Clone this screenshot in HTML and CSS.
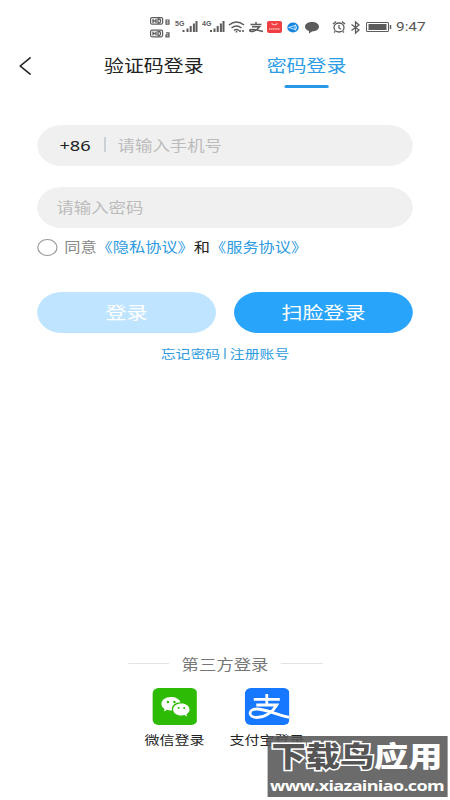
FILE: index.html
```html
<!DOCTYPE html>
<html lang="zh-CN">
<head>
<meta charset="utf-8">
<title>密码登录</title>
<link rel="stylesheet" href="styles.css">
</head>
<body>
<main class="screen">
  <header class="status">
    <svg class="status-icons" viewBox="0 0 396 44" preserveAspectRatio="none" fill="none" stroke="#5c5c5c">
      <g stroke-width="1.2"><rect x="150.6" y="17.6" width="12" height="6.6" rx="1.5"/><rect x="150.6" y="30.2" width="12" height="6.6" rx="1.5"/>
      <path d="M166 24.200v-4.200h3v4.200zM166 22h3M166 32.800h3v2h-3v2h3v-2"/></g>
      <path stroke-width="1.3" d="M153 19v4M156 19v4M153 21h3M158 19v4h1.2q1.4-.3 1.4-2t-1.4-2zM153 31.5v4M156 31.5v4M153 33.5h3M158 31.5v4h1.2q1.4-.3 1.4-2t-1.4-2z"/>
      <path stroke-width="2" d="M183.5 30v2M187.500 28.500v3.500M190.700 26v6M193.900 23.500v8.500M196.500 21v11M211 30v2M214.500 28.500v3.500M217.700 26v6M220.900 23.500v8.500M223.500 21v11"/>
      <path stroke-width="1.5" d="M229 25q7.500-6 15 0M231.500 28q5-4 10 0M234 30.500q2.500-2 5 0"/><path stroke-width="1.6" d="M236.500 31v1.500M240 30v2M243 30v2"/>
      <path stroke-width="1.500" d="M250.500 24.500h11M256 22v3M252 26.700h7.500Q256.500 31 252.500 31.500q-3.500 0-2.500-1.700 3-1.300 13 1.700"/>
      <rect x="267" y="21" width="15" height="12" rx="2" fill="#ef3f43" stroke="none"/><path stroke="#fbb" d="M271.500 23.500q3 2.500 6 0"/><path stroke="#fbb" stroke-dasharray="1.500 .6" stroke-width="1.500" d="M269 29h11"/>
      <ellipse cx="293" cy="27.500" rx="5.700" ry="5" fill="#1685e0" stroke="none"/><path stroke="#b8ddfa" d="M289 27.500l6-2v4zM295 24.500q3 3 0 6"/>
      <path fill="#5c5c5c" stroke="none" d="M312 22c4 0 7 2 7 4.700s-3 4.700-7 4.700l-3 2v-2.300c-2.500-1-4-2.400-4-4.400 0-2.700 3-4.700 7-4.700z"/>
      <ellipse cx="339" cy="27.500" rx="5" ry="4.500" stroke-width="1.300"/><path stroke-width="1.300" d="M333 24l3-2.500M345 24l-3-2.500M339 25v3l2 1.200M335 31.500l-1 1M343 31.500l1 1"/>
      <path stroke-width="1.300" d="M351.500 24.500l7.500 5.500-3.500 3V22l3.500 3-7.500 5.500"/>
      <rect x="366.500" y="22.500" width="22" height="9" rx="1"/><rect x="368.500" y="24" width="18" height="6" fill="#5c5c5c" stroke="none"/><path stroke-width="1.500" d="M390.500 25v4"/>
      <g class="net" fill="#5c5c5c" stroke="none"><text x="175" y="26">5G</text><text x="202" y="26">4G</text></g>
    </svg>
    <time class="clock">9:47</time>
  </header>
  <nav class="tabs">
    <svg class="back" viewBox="0 0 10 18" fill="none" stroke="#222" stroke-width="1.500"><path d="M9.500 .5L.8 9l8.700 8.500"/></svg>
    <span class="tab">验证码登录</span>
    <span class="tab active">密码登录</span>
  </nav>
  <form class="form">
    <div class="field phone"><span class="code">+86</span><i class="bar"></i><span>请输入手机号</span></div>
    <div class="field"><span>请输入密码</span></div>
    <div class="agree"><i class="radio"></i><span class="terms">同意<a>《隐私协议》</a><b>和</b><a>《服务协议》</a></span></div>
    <div class="actions"><span class="btn disabled">登录</span><span class="btn">扫脸登录</span></div>
    <div class="links"><a>忘记密码</a><i></i><a>注册账号</a></div>
  </form>
  <footer class="third">
    <div class="title">第三方登录</div>
    <div class="providers">
      <div class="provider">
        <svg class="logo" viewBox="0 0 45 37" preserveAspectRatio="none"><rect width="45" height="37" rx="6" fill="#2dbb05"/><path fill="#fff" d="M18.500 9c-5.500 0-9.500 3-9.500 6.800 0 2.200 1.300 4 3.200 5.200l-.7 2.500 3.300-1.700c1.200.4 2.500.6 3.700.6h1c-.8-5 3.500-8.200 8.500-8.200-.9-3.200-4.800-5.200-9.500-5.200z"/><path fill="#fff" d="M29 15.500c-4.800 0-8.300 2.600-8.300 6s3.500 6 8.300 6c1 0 2-.2 3-.4l2.800 1.400-.7-2.200c1.900-1.200 3-2.900 3-4.800 0-3.400-3.500-6-8.100-6z"/><g fill="#2dbb05"><circle cx="15.500" cy="14" r="1.200"/><circle cx="22" cy="14" r="1.200"/><circle cx="26.200" cy="20" r="1"/><circle cx="31.800" cy="20" r="1"/></g></svg>
        <span>微信登录</span>
      </div>
      <div class="provider">
        <svg class="logo" viewBox="0 0 45 37" preserveAspectRatio="none"><rect width="45" height="37" rx="6" fill="#1677ff"/><path fill="none" stroke="#fff" stroke-width="2.800" d="M9 11.300h26M22 6v11.500M11.500 17h20.500C28 24 20 29.500 12 29.500c-9 0-9-8.500 0-8.500 9 0 17 5 33 8.500"/></svg>
        <span>支付宝登录</span>
      </div>
    </div>
  </footer>
  <aside class="watermark">
    <div class="mark"><span>下载鸟</span>应用</div>
    <div class="site">www.xiazainiao.com</div>
  </aside>
</main>
</body>
</html>
```

FILE: styles.css
```css
* { box-sizing: border-box; }
body { margin: 0; width: 450px; height: 800px; overflow: hidden; background: #fff; }
/* The handset layout is 375 units wide and is widened to fill the window. */
.screen {
  position: relative; width: 375px; height: 800px;
  display: flex; flex-direction: column;
  transform: scaleX(1.2); transform-origin: 0 0;
  font-family: "Noto Sans", "Noto Sans CJK SC", sans-serif; color: #222;
}
i, b { font-style: normal; font-weight: 400; }
.status { display: flex; height: 44px; }
.status-icons { width: 330px; height: 44px; }
.net { font: 700 7px "Liberation Sans", sans-serif; }
.clock { font-size: 12.800px; line-height: 54px; color: #555; font-family: Roboto, sans-serif; }
.tabs { display: flex; height: 44px; padding-left: 16px; line-height: 44px; font-size: 16.600px; }
.back { width: 10px; height: 18px; margin: 13px 60.700px 0 0; }
.tab { position: relative; margin-right: 52.600px; white-space: nowrap; }
.tab.active { color: #2e9de6; margin: 0; }
.tab.active::after {
  content: ""; position: absolute; left: 14.500px; bottom: 0; width: 37.500px; height: 3px;
  border-radius: 2px; background: #2899e8;
}
.form { padding: 37px 31px 0; }
.field {
  display: flex; align-items: center; height: 41px; margin-bottom: 20.500px; padding: 0 0 2px 16px;
  border-radius: 21px; background: #f0f0f0; color: #bbb; font-size: 14.500px;
}
.phone { padding-left: 18.500px; }
.code { color: #222; width: 37.500px; font-size: 15.200px; }
.bar { width: 1px; height: 15px; margin-right: 10px; background: #b4bcc2; }
.agree {
  display: flex; align-items: center; height: 20px; margin-top: -11px;
  font-size: 13.500px; color: #888; white-space: nowrap;
}
.radio { width: 17px; height: 17px; border: 1px solid #999; border-radius: 50%; margin-right: 5.500px; }
.terms { padding-bottom: 2px; }
.agree b { color: #222; }
.agree a, .links { color: #2e9be0; }
.actions { display: flex; justify-content: space-between; margin-top: 35px; }
.btn {
  width: 149px; height: 41px; border-radius: 21px; background: #28a4fb; color: #fff;
  text-align: center; line-height: 41px; font-size: 17.500px;
}
.disabled { background: #bfe4ff; }
.links { display: flex; justify-content: center; align-items: center; height: 20px; margin-top: 10.500px; font-size: 12.400px; }
.links i { width: 1px; height: 11px; margin: 0 3.500px; background: #2e9be0; }
.third { margin-top: auto; height: 147px; }
.title {
  display: flex; align-items: center; width: 162px; height: 20px; margin-left: 106.500px;
  gap: 10.500px; font-size: 14.500px; color: #777; white-space: nowrap;
}
.title::before, .title::after { content: ""; flex: 1; height: 1px; background: #e4e4e4; }
.providers { display: flex; margin: 15px 0 0 107px; }
.provider { display: flex; flex-direction: column; align-items: center; width: 77px; font-size: 12.500px; white-space: nowrap; }
.logo { width: 37.500px; height: 37px; margin-bottom: 6px; }
.provider span { line-height: 19px; }
.watermark {
  position: absolute; left: 222.500px; top: 736px; width: 150px; height: 61px; overflow: hidden;
  background: rgba(85, 85, 85, .87); color: #fff; text-align: center; white-space: nowrap;
}
.mark { height: 38px; line-height: 40px; font-size: 28.500px; font-weight: 900; }
.mark span { color: #555; -webkit-text-stroke: 3px #fff; paint-order: stroke fill; }
.site { font: 700 15px/22px "Open Sans", sans-serif; letter-spacing: -.55px; }
```
